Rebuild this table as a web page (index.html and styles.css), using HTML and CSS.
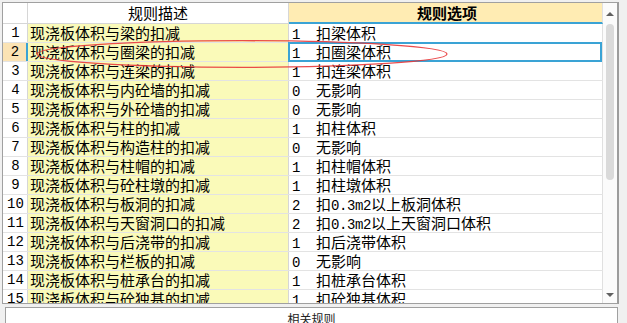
FILE: index.html
```html
<!DOCTYPE html>
<html lang="zh">
<head>
<meta charset="utf-8">
<title>规则</title>
<link rel="stylesheet" href="styles.css">
</head>
<body>
<div class="page">
  <div class="grid">
    <div class="table">
      <div class="row head">
        <div class="c num"></div>
        <div class="c desc">规则描述</div>
        <div class="c opt">规则选项</div>
      </div>
      <div class="row"><div class="c num">1</div><div class="c desc">现浇板体积与梁的扣减</div><div class="c opt"><span class="n">1</span>扣梁体积</div></div>
      <div class="row sel"><div class="c num">2</div><div class="c desc">现浇板体积与圈梁的扣减</div><div class="c opt"><span class="n">1</span>扣圈梁体积</div></div>
      <div class="row"><div class="c num">3</div><div class="c desc">现浇板体积与连梁的扣减</div><div class="c opt"><span class="n">1</span>扣连梁体积</div></div>
      <div class="row"><div class="c num">4</div><div class="c desc">现浇板体积与内砼墙的扣减</div><div class="c opt"><span class="n">0</span>无影响</div></div>
      <div class="row"><div class="c num">5</div><div class="c desc">现浇板体积与外砼墙的扣减</div><div class="c opt"><span class="n">0</span>无影响</div></div>
      <div class="row"><div class="c num">6</div><div class="c desc">现浇板体积与柱的扣减</div><div class="c opt"><span class="n">1</span>扣柱体积</div></div>
      <div class="row"><div class="c num">7</div><div class="c desc">现浇板体积与构造柱的扣减</div><div class="c opt"><span class="n">0</span>无影响</div></div>
      <div class="row"><div class="c num">8</div><div class="c desc">现浇板体积与柱帽的扣减</div><div class="c opt"><span class="n">1</span>扣柱帽体积</div></div>
      <div class="row"><div class="c num">9</div><div class="c desc">现浇板体积与砼柱墩的扣减</div><div class="c opt"><span class="n">1</span>扣柱墩体积</div></div>
      <div class="row"><div class="c num">10</div><div class="c desc">现浇板体积与板洞的扣减</div><div class="c opt"><span class="n">2</span>扣<span class="lat">0.3m2</span>以上板洞体积</div></div>
      <div class="row"><div class="c num">11</div><div class="c desc">现浇板体积与天窗洞口的扣减</div><div class="c opt"><span class="n">2</span>扣<span class="lat">0.3m2</span>以上天窗洞口体积</div></div>
      <div class="row"><div class="c num">12</div><div class="c desc">现浇板体积与后浇带的扣减</div><div class="c opt"><span class="n">1</span>扣后浇带体积</div></div>
      <div class="row"><div class="c num">13</div><div class="c desc">现浇板体积与栏板的扣减</div><div class="c opt"><span class="n">0</span>无影响</div></div>
      <div class="row"><div class="c num">14</div><div class="c desc">现浇板体积与桩承台的扣减</div><div class="c opt"><span class="n">1</span>扣桩承台体积</div></div>
      <div class="row"><div class="c num">15</div><div class="c desc">现浇板体积与砼独基的扣减</div><div class="c opt"><span class="n">1</span>扣砼独基体积</div></div>
    </div>
    <div class="scroll">
      <span class="up"></span>
      <span class="thumb"></span>
      <span class="down"></span>
    </div>
  </div>
  <div class="related">相关规则</div>
  <svg class="mark" width="627" height="323" viewBox="0 0 627 323">
    <ellipse cx="242" cy="54" rx="205" ry="13.3" fill="none" stroke="#e8393a" stroke-width="1.3" opacity="0.9"/>
  </svg>
</div>
</body>
</html>
```

FILE: styles.css
```css
* { box-sizing: border-box; }
body {
  margin: 0;
  width: 627px;
  height: 323px;
  overflow: hidden;
  background: #f0f0f0;
  font-family: "Noto Sans CJK SC", sans-serif;
  color: #000;
}
.page {
  position: relative;
  padding: 2px 0 0 2px;
}
.grid {
  display: flex;
  width: 617px;
  height: 302px;
  border: 1px solid #a0a0a0;
  border-right: 2px solid #9c9c9c;
  background: #fff;
}
.table {
  width: 600px;
  overflow: hidden;
}
.row {
  display: flex;
  height: 19px;
  border-bottom: 1px solid #e3e3e3;
}
.c {
  height: 18px;
  font-size: 15px;
  line-height: 18px;
  white-space: nowrap;
}
.num {
  width: 25px;
  border-right: 1px solid #d6d6d6;
  text-align: center;
  font-family: "Liberation Mono", monospace;
  font-size: 14px;
  padding-left: 1px;
}
.desc {
  width: 261px;
  border-right: 1px solid #d6d6d6;
  background: #fafab9;
  padding-left: 2px;
}
.opt {
  width: 314px;
  border-right: 1px solid #e0e0e0;
  padding-left: 3px;
  position: relative;
}
.n {
  display: inline-block;
  width: 24px;
  font-family: "Liberation Mono", monospace;
  font-size: 14px;
}
.lat {
  font-family: "Liberation Mono", monospace;
  font-size: 14px;
  letter-spacing: -0.4px;
}
.head {
  height: 21px;
  border-bottom: none;
}
.head .c {
  height: 21px;
  line-height: 20px;
  border-bottom: 1px solid #d6d6d6;
}
.head .desc {
  background: #fff;
  text-align: center;
  padding-left: 0;
}
.head .opt {
  background: #ffecb3;
  border-bottom: 2px solid #3aa3d5;
  text-align: center;
  font-weight: bold;
  line-height: 19px;
}
.sel .num {
  background: #fbe3b4;
  border-right: 2px solid #3aa3d5;
}
.sel .opt::after {
  content: "";
  position: absolute;
  left: -1px;
  right: 0;
  top: -1px;
  bottom: -1px;
  border: 2px solid #3aa3d5;
}
.scroll {
  width: 14px;
  background: #fbfbfb;
  display: flex;
  flex-direction: column;
  align-items: center;
}
.up {
  margin-top: 9px;
  border-left: 4px solid transparent;
  border-right: 4px solid transparent;
  border-bottom: 4px solid #606060;
}
.thumb {
  margin-top: 8px;
  width: 8px;
  height: 156px;
  border-radius: 4px;
  background: #dadada;
}
.down {
  margin-top: auto;
  margin-bottom: 6px;
  border-left: 4px solid transparent;
  border-right: 4px solid transparent;
  border-top: 4px solid #606060;
}
.related {
  margin: 3px 0 0 3px;
  width: 613px;
  height: 30px;
  border: 1px solid #a0a0a0;
  background: #fff;
  font-size: 12px;
  line-height: 14px;
  padding-top: 4px;
  text-align: center;
  color: #222;
}
.mark {
  position: absolute;
  left: 0;
  top: 0;
  pointer-events: none;
}
```
